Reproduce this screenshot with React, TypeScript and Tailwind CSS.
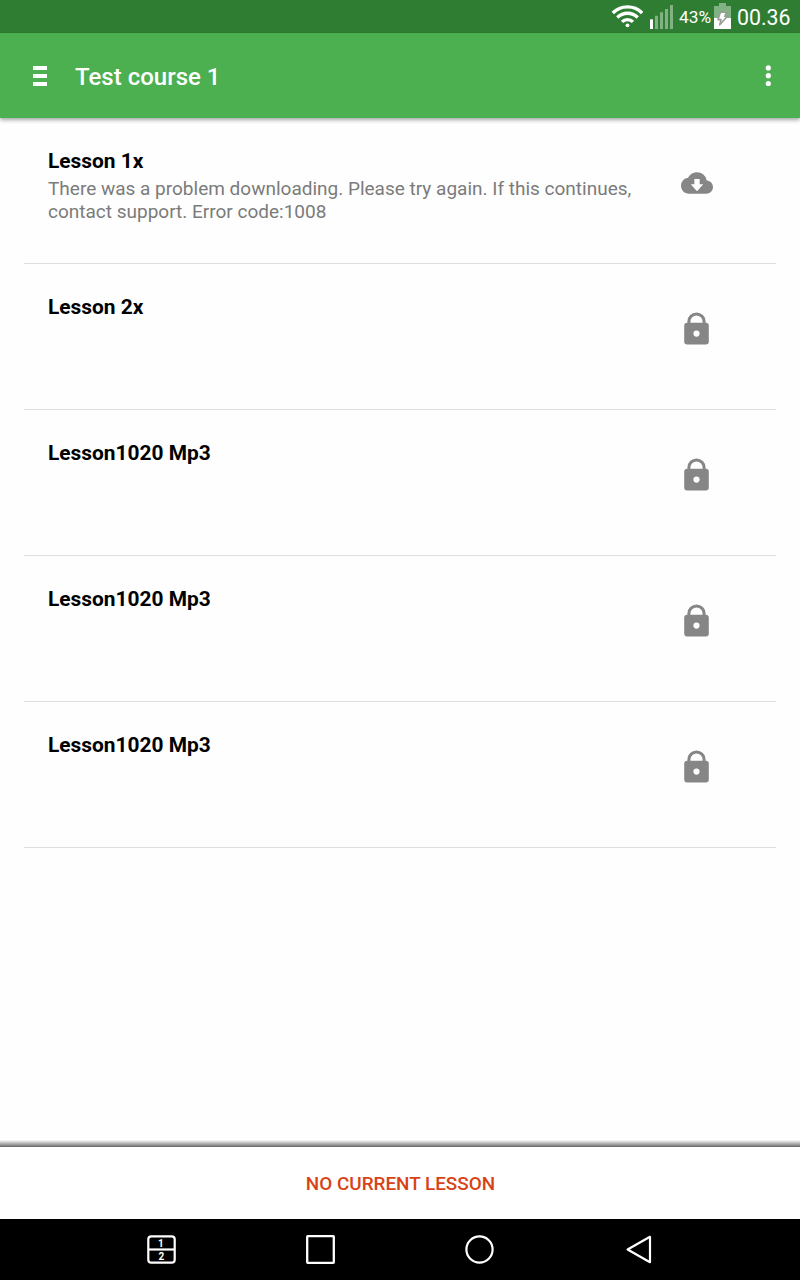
interface Lesson {
  id: number;
  title: string;
  message?: string;
  locked: boolean;
}

const lessons: Lesson[] = [
  {
    id: 1,
    title: "Lesson 1x",
    message:
      "There was a problem downloading. Please try again. If this continues, contact support. Error code:1008",
    locked: false,
  },
  { id: 2, title: "Lesson 2x", locked: true },
  { id: 3, title: "Lesson1020 Mp3", locked: true },
  { id: 4, title: "Lesson1020 Mp3", locked: true },
  { id: 5, title: "Lesson1020 Mp3", locked: true },
];

const WifiIcon = () => (
  <svg width="32" height="24" viewBox="0 0 32 24" fill="none" stroke="white" strokeWidth="3.4">
    <path d="M1.8 9C9.6 .8 23.4 .8 31.2 9" />
    <path d="M6.3 13.5c5.6-5.7 14.8-5.7 20.4 0" />
    <path d="M11 17.9c3-3 8-3 11 0" />
    <circle cx="16.5" cy="21.3" r="1.9" fill="white" stroke="none" />
  </svg>
);

const SignalIcon = () => (
  <svg width="23" height="24" viewBox="0 0 23 24" fill="white">
    <path d="M0 14.3h3V24H0z" />
    <path
      opacity="0.4"
      d="M5 10.7h3V24H5zM10 7.3h3V24h-3zM15 4h3v20h-3zM20 0h3v24h-3z"
    />
  </svg>
);

const BatteryIcon = () => (
  <svg width="17" height="26" viewBox="0 0 17 26">
    <path d="M5 0h7v3h5v12H0V3h5z" fill="white" opacity="0.4" />
    <path d="M0 15h17v11H0z" fill="white" />
    <path
      d="M6.4 9.2h6l-1.6 4h2.6l-7.6 8.6 1.2-5.2H4z"
      fill="white"
      stroke="#969e96"
      strokeWidth="1.6"
      strokeLinejoin="round"
    />
  </svg>
);

const CloudDownloadIcon = () => (
  <svg width="32" height="32" viewBox="0 0 24 24" fill="#868686">
    <path d="M19.35 10.04A7.49 7.49 0 0 0 12 4C9.11 4 6.6 5.64 5.35 8.04A5.994 5.994 0 0 0 0 14c0 3.31 2.69 6 6 6h13c2.76 0 5-2.24 5-5 0-2.64-2.05-4.78-4.65-4.96zM16.7 13L12 18.1 7.3 13H10V9h4v4h2.7z" />
  </svg>
);

const LockIcon = () => (
  <svg width="25" height="33" viewBox="0 0 25 33" fill="none">
    <path d="M4.9 12V9.4a7.6 7.4 0 0 1 15.2 0V12" stroke="#868686" strokeWidth="3" />
    <rect x="0.2" y="10.8" width="24.6" height="21.6" rx="3" fill="#868686" />
    <circle cx="12.5" cy="21.6" r="3.1" fill="#fefefe" />
  </svg>
);

const StatusBar = () => (
  <div className="flex h-[33px] shrink-0 items-start bg-[#2f7d32] pl-[611px] text-white">
    <div className="mt-1">
      <WifiIcon />
    </div>
    <div className="mt-[5px] ml-[7px]">
      <SignalIcon />
    </div>
    <span className="mt-[7px] ml-[6px] w-[35px] text-[17.3px] leading-5">43%</span>
    <div className="mt-[3px]">
      <BatteryIcon />
    </div>
    <span className="mt-[5px] ml-[6px] text-[21.3px] leading-[26px]">00.36</span>
  </div>
);

const AppBar = () => (
  <header className="relative flex h-[85px] shrink-0 items-center bg-[#4caf50] text-white shadow-[0_2px_4px_rgba(0,0,0,0.35)]">
    <button aria-label="Menu" className="ml-[33px] flex w-[14px] flex-col gap-1">
      <span className="h-1 bg-white" />
      <span className="h-1 bg-white" />
      <span className="h-1 bg-white" />
    </button>
    <h1 className="ml-7 flex-1 pt-0.5 text-[24px] leading-7 font-medium">Test course 1</h1>
    <button aria-label="More options" className="mr-[29px]">
      <svg width="6" height="22" viewBox="0 0 6 22" fill="white">
        <circle cx="3.3" cy="2.9" r="2.6" />
        <circle cx="3.3" cy="10.7" r="2.6" />
        <circle cx="3.3" cy="18.5" r="2.6" />
      </svg>
    </button>
  </header>
);

const LessonRow = ({ title, message, locked }: Lesson) => (
  <li className="flex h-[146px] border-b border-[#dedede] px-6 pt-[30px]">
    <div className="w-[608px]">
      <h2 className="text-[20.9px] leading-[26px] font-bold text-black">{title}</h2>
      {message && <p className="mt-[3px] text-[19px] leading-[23px] text-[#7b7b7b]">{message}</p>}
    </div>
    <div className="flex w-[81px] items-start justify-center">
      <div className={locked ? "mt-[18px]" : "mt-[19px]"}>
        {locked ? <LockIcon /> : <CloudDownloadIcon />}
      </div>
    </div>
  </li>
);

const NavBar = () => (
  <nav className="h-[61px] shrink-0 bg-black">
    <div className="flex h-full items-center justify-between px-[147px]">
      <svg width="29" height="29" viewBox="0 0 29 29" fill="none" stroke="white" strokeWidth="2.2">
        <rect x="1.3" y="1.3" width="26.4" height="26.4" rx="3" />
        <path d="M1 14.5h27" />
        <text x="13.8" y="11.5" textAnchor="middle" fontSize="10" fontWeight="700" fill="white" stroke="none">
          1
        </text>
        <text x="14.4" y="25" textAnchor="middle" fontSize="10" fontWeight="700" fill="white" stroke="none">
          2
        </text>
      </svg>
      <svg width="29" height="29" viewBox="0 0 29 29" fill="none" stroke="white" strokeWidth="2.3">
        <rect x="1.2" y="1.2" width="26.6" height="26.6" rx="0.5" />
      </svg>
      <svg width="29" height="29" viewBox="0 0 29 29" fill="none" stroke="white" strokeWidth="2.2">
        <circle cx="14.5" cy="14.5" r="13.1" />
      </svg>
      <svg width="29" height="29" viewBox="0 0 29 29" fill="none" stroke="white" strokeWidth="2.2">
        <path d="M26 1.8v25.4L3.6 14.5z" strokeLinejoin="round" />
      </svg>
    </div>
  </nav>
);

export default function App() {
  return (
    <div className="flex h-[1280px] w-[800px] flex-col overflow-hidden bg-[#fefefe] font-[Roboto,sans-serif]">
      <StatusBar />
      <AppBar />
      <main className="flex-1 px-6">
        <ul>
          {lessons.map((lesson) => (
            <LessonRow key={lesson.id} {...lesson} />
          ))}
        </ul>
      </main>
      <div className="h-[7px] shrink-0 bg-linear-to-b from-transparent to-[#666666]" />
      <footer className="flex h-[72px] shrink-0 items-center justify-center bg-white pt-0.5 pl-px">
        <button className="text-[18.9px] leading-6 font-medium text-[#d84315]">NO CURRENT LESSON</button>
      </footer>
      <NavBar />
    </div>
  );
}
